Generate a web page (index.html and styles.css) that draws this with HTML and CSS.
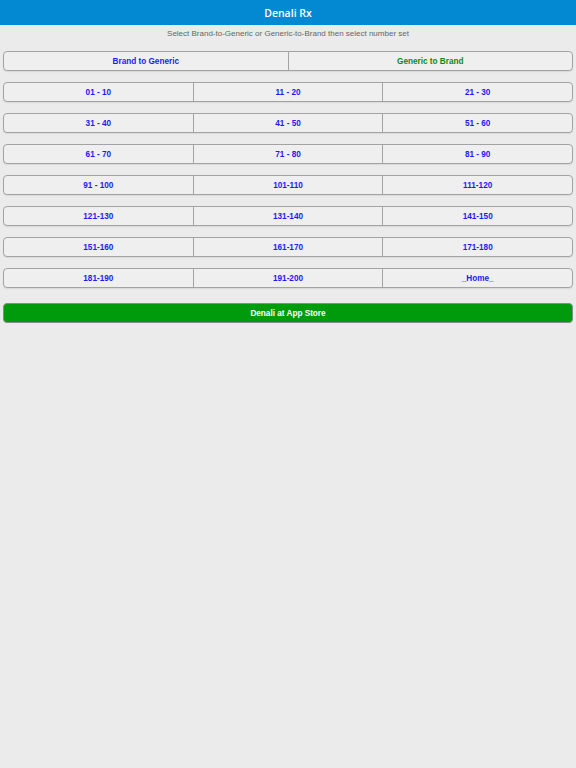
FILE: index.html
```html
<!DOCTYPE html>
<html lang="en">
<head>
    <meta charset="UTF-8">
    <meta name="viewport" content="width=device-width, initial-scale=1.0">
    <title>Denali Rx</title>
    <link rel="stylesheet" href="styles.css">
</head>
<body>
    <div class="header">Denali Rx</div>

    <div class="subtitle">Select Brand-to-Generic or Generic-to-Brand then select number set</div>

    <div class="content">
        <div class="group">
            <button class="btn blue">Brand to Generic</button>
            <button class="btn green">Generic to Brand</button>
        </div>

        <div class="group">
            <button class="btn blue">01 - 10</button>
            <button class="btn blue">11 - 20</button>
            <button class="btn blue">21 - 30</button>
        </div>
        <div class="group">
            <button class="btn blue">31 - 40</button>
            <button class="btn blue">41 - 50</button>
            <button class="btn blue">51 - 60</button>
        </div>
        <div class="group">
            <button class="btn blue">61 - 70</button>
            <button class="btn blue">71 - 80</button>
            <button class="btn blue">81 - 90</button>
        </div>
        <div class="group">
            <button class="btn blue">91 - 100</button>
            <button class="btn blue">101-110</button>
            <button class="btn blue">111-120</button>
        </div>
        <div class="group">
            <button class="btn blue">121-130</button>
            <button class="btn blue">131-140</button>
            <button class="btn blue">141-150</button>
        </div>
        <div class="group">
            <button class="btn blue">151-160</button>
            <button class="btn blue">161-170</button>
            <button class="btn blue">171-180</button>
        </div>
        <div class="group">
            <button class="btn blue">181-190</button>
            <button class="btn blue">191-200</button>
            <button class="btn blue">_Home_</button>
        </div>

        <button class="store">Denali at App Store</button>
    </div>
</body>
</html>
```

FILE: styles.css
```css
* {
    margin: 0;
    padding: 0;
    box-sizing: border-box;
}

body {
    background: #ebebeb;
    font-family: "Liberation Sans", Arial, sans-serif;
    min-height: 100vh;
}

/* Top bar */
.header {
    height: 25px;
    line-height: 26px;
    background: #0389d2;
    color: white;
    text-align: center;
    font-family: "Open Sans", "Noto Sans", sans-serif;
    font-weight: 600;
    font-size: 10.5px;
}

.subtitle {
    height: 26px;
    line-height: 18px;
    text-align: center;
    color: #666;
    font-size: 8px;
}

.content {
    padding: 0 3px;
}

/* Segmented button rows */
.group {
    display: flex;
    height: 20px;
    margin-bottom: 11px;
    border: 1px solid #a3a3a3;
    border-radius: 4px;
    background: #efefef;
    overflow: hidden;
    box-shadow: 0 1px 1px rgba(0, 0, 0, 0.08);
}

.btn {
    flex: 1;
    border: none;
    border-left: 1px solid #a3a3a3;
    background: transparent;
    font-family: "Liberation Sans", Arial, sans-serif;
    font-size: 8.2px;
    font-weight: bold;
}

.btn:first-child {
    border-left: none;
}

.blue { color: #1a1aff; }
.green { color: #0a8a0a; }

/* App store button */
.store {
    display: block;
    width: 100%;
    height: 20px;
    margin-top: 15px;
    background: #009b0c;
    border: 1px solid #8a8a8a;
    border-radius: 4px;
    color: white;
    font-family: "Liberation Sans", Arial, sans-serif;
    font-size: 8.2px;
    font-weight: bold;
}
```
